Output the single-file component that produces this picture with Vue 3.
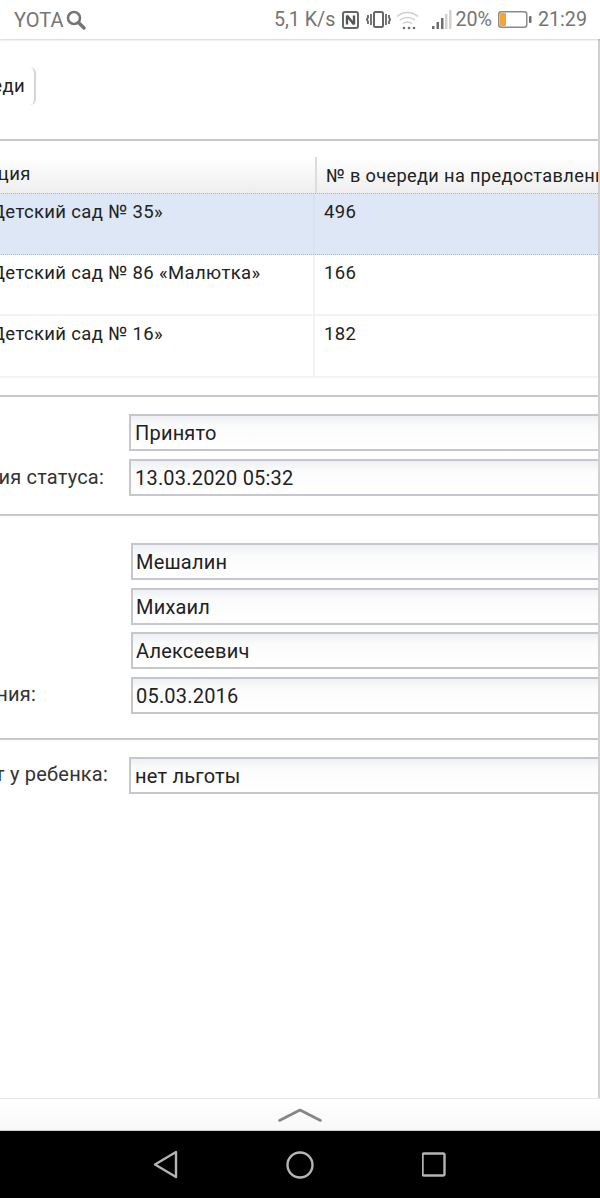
<script setup>
const rows = [
  { name: 'МБДОУ «Детский сад № 35»', place: '496', active: true },
  { name: 'МБДОУ «Детский сад № 86 «Малютка»', place: '166' },
  { name: 'МБДОУ «Детский сад № 16»', place: '182' },
]

const statusFields = [
  { label: '', value: 'Принято' },
  { label: 'Дата изменения статуса:', value: '13.03.2020 05:32' },
]

const childFields = [
  { label: '', value: 'Мешалин' },
  { label: '', value: 'Михаил' },
  { label: '', value: 'Алексеевич' },
  { label: 'Дата рождения:', value: '05.03.2016' },
]
</script>

<template>
  <div class="screen">
    <header class="statusbar">
      <div class="sb-left">
        <span>YOTA</span>
        <svg class="ic-search" width="20" height="20" viewBox="0 0 20 20">
          <circle cx="8" cy="8" r="6" fill="none" stroke="#757575" stroke-width="2.6" />
          <path d="M12.5 12.5 18 18" stroke="#757575" stroke-width="3.4" stroke-linecap="round" />
        </svg>
      </div>
      <div class="sb-right">
        <span class="speed">5,1 K/s</span>
        <svg class="ic-nfc" width="17" height="18" viewBox="0 0 17 18">
          <rect x="1" y="1" width="15" height="16" rx="2" fill="#fff" stroke="#666" stroke-width="2" />
          <path d="M5 4.500v9M5 4.500l7 9M12 4.500v9" stroke="#555" stroke-width="2.400" fill="none" />
        </svg>
        <svg class="ic-vibe" width="25" height="17" viewBox="0 0 25 17">
          <rect x="8" y="1" width="9" height="15" rx="1.500" fill="none" stroke="#666" stroke-width="2" />
          <path d="M5 3v11M2 4v2.500L0.800 8.500 2 10.500V13M20 3v11M23 4v2.500l1.200 2L23 10.500V13" fill="none" stroke="#666" stroke-width="1.800" />
        </svg>
        <svg class="ic-wifi" width="23" height="20" viewBox="0 0 23 20">
          <path d="M1 6.500C7 1 16 1 22 6.500M4 10c4.500-3.500 10.500-3.500 15 0M7 13.500c2.800-2 6.200-2 9 0" fill="none" stroke="#cfcfcf" stroke-width="1.500" />
          <circle cx="8" cy="18" r="1.300" fill="#707070" />
          <circle cx="13" cy="18" r="1.300" fill="#707070" />
          <circle cx="18" cy="18" r="1.300" fill="#707070" />
        </svg>
        <svg class="ic-signal" width="20" height="19" viewBox="0 0 20 19">
          <rect x="0" y="16" width="2.500" height="3" fill="#6e6e6e" />
          <rect x="4.500" y="12" width="2.500" height="7" fill="#6e6e6e" />
          <rect x="9" y="8" width="2.500" height="11" fill="#6e6e6e" />
          <rect x="13" y="4" width="2.500" height="15" fill="#d2d2d2" />
          <rect x="17" y="0" width="2.500" height="19" fill="#d2d2d2" />
        </svg>
        <span class="pct">20%</span>
        <svg class="ic-batt" width="34" height="17" viewBox="0 0 34 17">
          <rect x="0.750" y="0.750" width="28" height="15.500" rx="2.500" fill="#fff" stroke="#8a8a8a" stroke-width="1.500" />
          <rect x="2" y="2" width="6" height="13" rx="1" fill="#f7a233" />
          <rect x="31" y="5" width="2.500" height="7" rx="1" fill="#6e6e6e" />
        </svg>
        <span class="clock">21:29</span>
      </div>
    </header>

    <main class="viewport">
      <div class="page">
        <div class="btn-row">
          <button class="queue-btn">Позиция в очереди</button>
        </div>
        <hr class="sep" />

        <div class="grid">
          <div class="grid-head">
            <div class="col-name">Образовательная организация</div>
            <div class="col-place">№ в очереди на предоставление места</div>
          </div>
          <div
            v-for="row in rows"
            :key="row.name"
            class="grid-row"
            :class="{ active: row.active }"
          >
            <div class="cell-name">{{ row.name }}</div>
            <div class="cell-place">{{ row.place }}</div>
          </div>
        </div>

        <hr class="sep sep-status" />
        <section class="form form-status">
          <div v-for="f in statusFields" :key="f.value" class="form-row">
            <label class="lbl">{{ f.label }}</label>
            <div class="field">{{ f.value }}</div>
          </div>
        </section>

        <hr class="sep" />
        <section class="form form-child">
          <div v-for="f in childFields" :key="f.value" class="form-row">
            <label class="lbl">{{ f.label }}</label>
            <div class="field">{{ f.value }}</div>
          </div>
        </section>

        <hr class="sep" />
        <section class="form form-benefit">
          <div class="form-row">
            <label class="lbl">Наличие льгот у ребенка:</label>
            <div class="field">нет льготы</div>
          </div>
        </section>
      </div>
    </main>

    <div class="browser-bar">
      <svg width="44" height="14" viewBox="0 0 44 14">
        <path d="M1.500 12.500 22 2l20.500 10.500" fill="none" stroke="#858585" stroke-width="2.600" stroke-linecap="round" stroke-linejoin="round" />
      </svg>
    </div>

    <nav class="navbar">
      <svg width="25" height="29" viewBox="0 0 25 29">
        <path d="M23 2v25L2 14.500Z" fill="none" stroke="#b4b4b4" stroke-width="2.400" stroke-linejoin="round" />
      </svg>
      <svg width="28" height="28" viewBox="0 0 28 28">
        <circle cx="14" cy="14" r="12.500" fill="none" stroke="#b4b4b4" stroke-width="2.400" />
      </svg>
      <svg width="25" height="25" viewBox="0 0 25 25">
        <rect x="0.500" y="1.500" width="22" height="22" rx="1.500" fill="none" stroke="#b4b4b4" stroke-width="2.400" />
      </svg>
    </nav>
  </div>
</template>

<style>
body {
  background: #fff;
}
</style>

<style scoped>
.screen {
  display: flex;
  flex-direction: column;
  height: 1198px;
  width: 600px;
  overflow: hidden;
  font-family: Roboto, "Liberation Sans", sans-serif;
  background: #fff;
}

.statusbar {
  flex: none;
  height: 39px;
  padding: 0 13px 0 14px;
  display: flex;
  align-items: center;
  justify-content: space-between;
  font-size: 20px;
  color: #757575;
  box-shadow: 0 1px 2px rgba(0, 0, 0, 0.18);
  position: relative;
}
.sb-left {
  display: flex;
  align-items: center;
  gap: 3px;
}
.sb-right {
  display: flex;
  align-items: center;
  font-size: 19.700px;
}
.ic-nfc { margin-left: 7px; }
.ic-vibe { margin-left: 7px; }
.ic-wifi { margin-left: 5px; }
.ic-signal { margin-left: 13px; }
.pct { margin-left: 3px; }
.ic-batt { margin-left: 6px; }
.clock { margin-left: 6px; }

.viewport {
  flex: 1;
  min-height: 0;
  overflow: hidden;
  border-right: 2px solid #d0d0d0;
}
.page {
  width: 1000px;
  margin-left: -300px;
  padding-top: 1px;
  color: #222;
}

.btn-row {
  padding: 27px 0 34px;
  height: 99px;
  box-sizing: border-box;
  display: flex;
  justify-content: flex-start;
}
.queue-btn {
  width: 336px;
  height: 38px;
  padding: 0 9px 0 0;
  text-align: right;
  font: 18.500px Roboto, sans-serif;
  letter-spacing: 0.350px;
  color: #222;
  background: #fff;
  border: 0;
  border-right: 2px solid #d4d4d4;
  border-radius: 0 6px 6px 0;
}

.sep {
  margin: 0;
  border: 0;
  height: 2px;
  background: #c6c6ce;
}

.grid {
  margin-top: 16px;
  font-size: 18.500px;
  letter-spacing: 0.350px;
}
.grid-head {
  display: flex;
  height: 36px;
  align-items: center;
  background: linear-gradient(#fff, #eeeeee);
}
.col-name {
  width: 617px;
  padding-left: 52px;
  box-sizing: border-box;
  height: 100%;
  line-height: 35px;
  border-right: 2px solid #dcdcdc;
  white-space: nowrap;
}
.col-place {
  padding-left: 9px;
  font-size: 18.200px;
  white-space: nowrap;
}
.grid-row {
  display: flex;
  height: 61.700px;
  box-sizing: border-box;
  border-bottom: 2px solid #f3f3f3;
}
.grid-row.active {
  background: #dee7f6;
  border-top: 1px dotted #a9b4c8;
  border-bottom: 1px dotted #a9b4c8;
}
.cell-name {
  width: 615px;
  box-sizing: border-box;
  padding: 7px 0 0 209.500px;
  border-right: 2px solid #f3f3f3;
  white-space: nowrap;
}
.cell-place {
  padding: 7px 0 0 9px;
}
.grid-row.active .cell-name {
  border-right-color: #d8e1f0;
}

.sep-status {
  margin-top: 17px;
}

.form {
  display: flex;
  flex-direction: column;
  font-size: 20px;
  letter-spacing: 0.200px;
}
.form-row {
  display: flex;
  align-items: center;
}
.lbl {
  text-align: right;
  box-sizing: border-box;
  padding-bottom: 2px;
  white-space: nowrap;
  color: #333;
}
.field {
  flex: 1;
  height: 37px;
  box-sizing: border-box;
  padding-left: 4px;
  line-height: 34px;
  color: #222;
  border: 2px solid #c6c6ce;
  border-right: 0;
  background: linear-gradient(#eef0f3, #fbfbfc 30%, #fff);
}

.form-status {
  padding: 17px 0 18px;
  gap: 8px;
}
.form-status .lbl {
  width: 404px;
  margin-right: 25px;
}

.form-child {
  padding: 27px 0 24px;
  gap: 7.500px;
}
.form-child .lbl {
  width: 336px;
  margin-right: 95px;
}
.form-child .field {
  padding-left: 3px;
}

.form-benefit {
  padding: 17px 0 0;
}
.form-benefit .lbl {
  width: 408px;
  margin-right: 21px;
}

.browser-bar {
  flex: none;
  height: 33px;
  box-sizing: border-box;
  border-top: 1px solid #e6e6e6;
  border-bottom: 1px solid #cfcfcf;
  background: linear-gradient(#fff, #f8f8f8);
  display: flex;
  justify-content: center;
  padding-top: 9px;
}

.navbar {
  flex: none;
  height: 67px;
  background: #000;
  display: flex;
  align-items: center;
  justify-content: center;
  gap: 108px;
}
</style>
